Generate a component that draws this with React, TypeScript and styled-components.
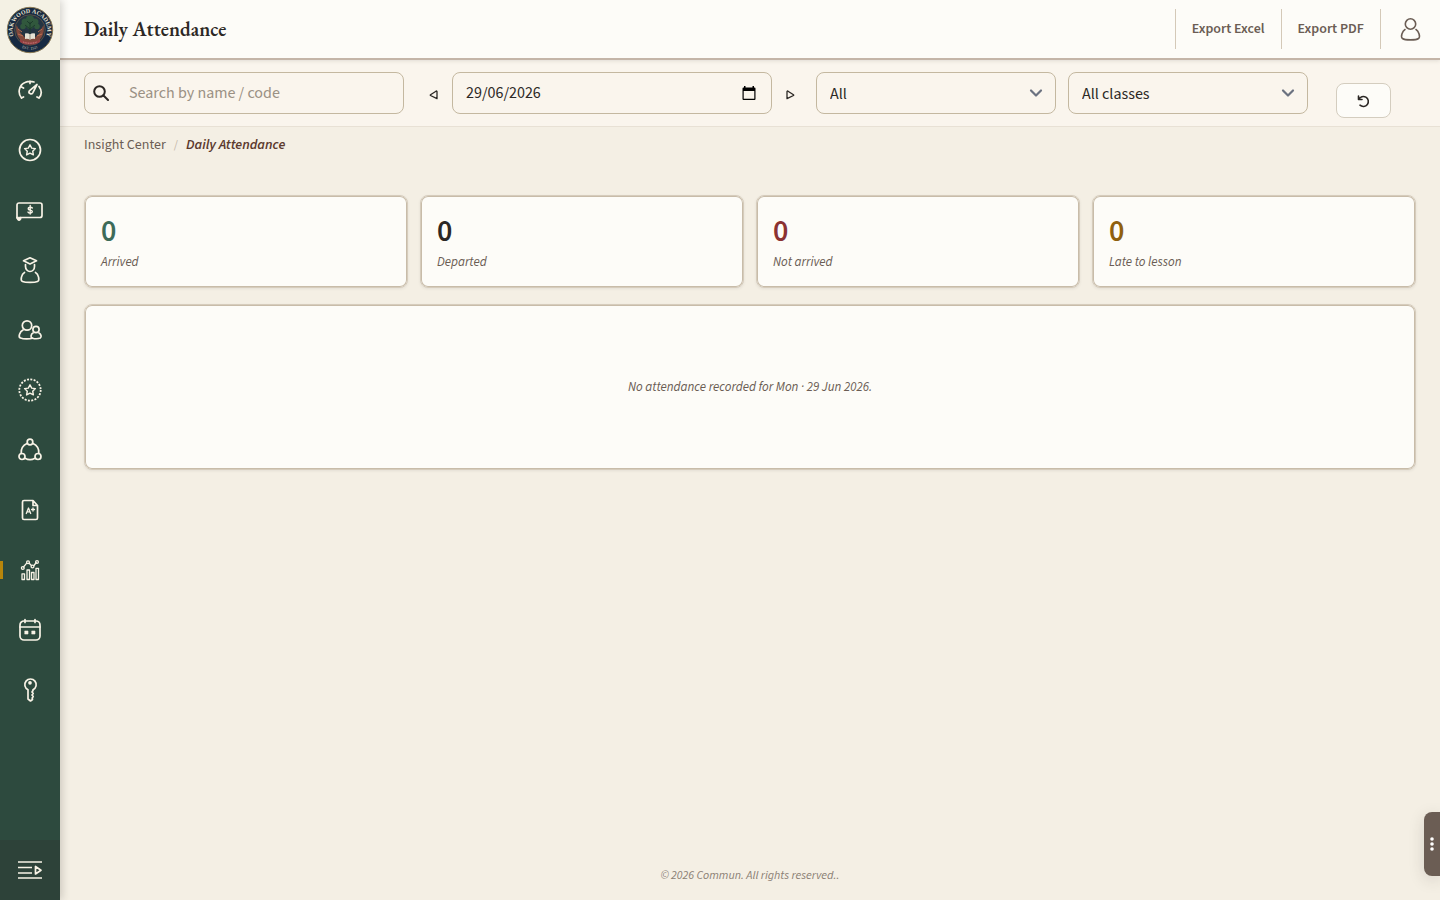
import React from 'react';
import styled, { createGlobalStyle } from 'styled-components';

const sans = '"Source Sans 3", "Source Sans Pro", "Noto Sans CJK SC", "Noto Sans", sans-serif';

const GlobalStyle = createGlobalStyle`
  *, *::before, *::after { box-sizing: border-box; }
  body { margin: 0; background: #f4efe4; color: #2c2825; font: 16px/20px ${sans}; }
  button, input, select { font: inherit; color: inherit; margin: 0; }
  button { border: 0; padding: 0; background: none; cursor: pointer; }
  svg { display: block; }
`;

const Page = styled.div`
  display: grid;
  grid-template-columns: 60px minmax(0, 1fr);
  min-height: 100vh;
`;

const Sidebar = styled.nav`
  position: sticky;
  top: 0;
  z-index: 2;
  height: 100vh;
  display: flex;
  flex-direction: column;
  background: #2d4a3e;
  box-shadow: 2px 0 8px rgba(44, 40, 37, 0.2);
`;

const LogoLink = styled.a`
  display: grid;
  place-items: center;
  height: 60px;
  background: #f4f1e4;
`;

const NavLink = styled.a<{ $active?: boolean }>`
  display: grid;
  place-items: center;
  height: 60px;
  color: #f8f3e6;
  background: ${p => (p.$active ? 'linear-gradient(#b8860b, #b8860b) left center / 3px 18px no-repeat' : 'none')};
`;

const SidebarToggle = styled.button`
  display: grid;
  place-items: center;
  height: 60px;
  margin-top: auto;
  color: #f8f3e6;
  background: #2d4239;
`;

const Column = styled.div`
  display: flex;
  flex-direction: column;
  min-width: 0;
`;

const Header = styled.header`
  display: flex;
  align-items: center;
  justify-content: space-between;
  height: 60px;
  padding-left: 24px;
  background: #fdfcf8;
  border-bottom: 2px solid #c4b5a8;
  box-shadow: 0 1px 4px rgba(44, 40, 37, 0.12);
  z-index: 1;
`;

const Title = styled.h1`
  margin: 0;
  font: 600 20px/28px "EB Garamond", "Liberation Serif", serif;
`;

const Actions = styled.div`
  display: flex;
  align-items: center;
`;

const ExportButton = styled.button`
  height: 40px;
  padding: 0 16px;
  border-left: 1px solid #d4c9b8;
  color: #6b5d54;
  font-size: 14px;
  font-weight: 600;
`;

const ProfileButton = styled.button`
  display: grid;
  place-items: center;
  width: 60px;
  height: 40px;
  border-left: 1px solid #d4c9b8;
  color: #6b5d54;
`;

const FilterBar = styled.form`
  display: flex;
  align-items: center;
  flex-wrap: wrap;
  gap: 12px;
  padding: 12px 24px;
  background: #faf5ed;
  border-bottom: 1px solid #e8e1d5;
`;

const Field = styled.label`
  display: flex;
  align-items: center;
  width: 320px;
  height: 42px;
  padding: 0 8px;
  border: 1px solid #c4b8a0;
  border-radius: 8px;
`;

const TextInput = styled.input`
  flex: 1;
  min-width: 0;
  padding: 0 5px;
  border: 0;
  outline: 0;
  background: none;
  font-variant-numeric: tabular-nums;
  &::placeholder { color: #9b9184; opacity: 1; }
`;

const SearchInput = styled(TextInput)`
  padding-left: 20px;
`;

const DateGroup = styled.div`
  display: flex;
  align-items: center;
  margin-right: -4px;
`;

const StepButton = styled.button`
  display: grid;
  place-items: center;
  width: 36px;
  height: 42px;
  padding-top: 4px;
`;

const CalendarButton = styled.button`
  padding: 4px 7px;
  color: #000;
`;

const SelectBox = styled.div`
  display: grid;
  align-items: center;
  width: 240px;
  & > * { grid-area: 1 / 1; }
  & > svg { justify-self: end; margin-right: 12px; pointer-events: none; }
`;

const Select = styled.select`
  appearance: none;
  width: 100%;
  height: 42px;
  padding: 2px 40px 0 13px;
  border: 1px solid #c4b8a0;
  border-radius: 8px;
  background: transparent;
`;

const ResetButton = styled.button`
  display: grid;
  place-items: center;
  align-self: flex-end;
  width: 55px;
  height: 35px;
  margin: 0 0 -4px 16px;
  border: 1px solid #d4cdbf;
  border-radius: 8px;
  background: #fdfcf8;
`;

const Breadcrumb = styled.nav`
  display: flex;
  gap: 8px;
  padding: 8px 24px;
  font-size: 14px;
  color: #c4b8a8;
`;

const Divider = styled.span`
  font-size: 12px;
`;

const CrumbLink = styled.a`
  color: #6b5d54;
  text-decoration: none;
`;

const CurrentCrumb = styled.span`
  color: #5c3a2e;
  font-weight: 600;
  font-style: italic;
`;

const Content = styled.main`
  display: flex;
  flex-direction: column;
  gap: 16px;
  padding: 32px 24px;
`;

const Stats = styled.section`
  display: grid;
  grid-template-columns: repeat(4, minmax(0, 1fr));
  gap: 12px;
`;

const Card = styled.div`
  border: 1px solid #d6ccbc;
  border-radius: 8px;
  background: #fdfcf8;
  box-shadow: inset 0 0 0 1px #c8bca9, 0 1px 3px rgba(44, 40, 37, 0.08);
`;

const StatCard = styled(Card)`
  height: 93px;
  padding: 16px;
`;

const StatValue = styled.div<{ $color: string }>`
  color: ${p => p.$color};
  font-size: 30px;
  line-height: 40px;
  font-weight: 600;
`;

const StatLabel = styled.div`
  color: #6b5d54;
  font-size: 13px;
  font-style: italic;
`;

const EmptyCard = styled(Card)`
  display: grid;
  place-items: center;
  height: 166px;
  color: #6b5d54;
  font-size: 13px;
  font-style: italic;
`;

const Footer = styled.footer`
  margin-top: auto;
  padding-bottom: 14px;
  text-align: center;
  color: #8b8074;
  font-size: 12px;
  font-style: italic;
`;

const SideTab = styled.button`
  position: fixed;
  right: 0;
  bottom: 24px;
  z-index: 3;
  display: grid;
  place-items: center;
  width: 16px;
  height: 64px;
  border-radius: 8px 0 0 8px;
  background: #6b5d54;
  color: #fff;
  box-shadow: 0 4px 16px rgba(44, 40, 37, 0.15);
`;

const Icon = ({ children, size = 28, width = 1.7 }: { children: React.ReactNode; size?: number; width?: number }) => (
  <svg width={size} height={size} viewBox={`0 0 ${size} ${size}`} fill="none" stroke="currentColor"
    strokeWidth={width} strokeLinecap="round" strokeLinejoin="round" aria-hidden="true">{children}</svg>
);

const star = 'M14 8.800l1.700 3.300 3.700.5-2.700 2.600.7 3.700-3.400-1.800-3.400 1.800.7-3.700-2.700-2.600 3.700-.5z';

const navItems = [
  { label: 'Dashboard', icon: <><path d="M5.500 22c-4.200-5-2.500-13 3.500-15.500A12 12 0 0 1 18 6M23 10.500c3 4 2.500 8.500 0 11.500M5.500 22l2-1M23 22l-2-1M14 5v2.500M5.500 11l2 1" /><path d="M21 8.500l-4.200 8.300a2 2 0 0 1-3.500-2z" /></> },
  { label: 'Achievements', icon: <><circle cx="14" cy="14" r="10.500" /><path d={star} strokeWidth="1.400" /></> },
  { label: 'Finance', icon: <><path d="M4.500 21.500H24a2 2 0 0 0 2-2V9a2 2 0 0 0-2-2H3a2 2 0 0 0-2 2v13" /><path d="M1 21.300h4v1.200a2 2 0 0 1-4 0z" fill="currentColor" strokeWidth="1" /><path d="M16.300 12c-1-1.300-4.300-1-4.100.8.200 1.800 4 .8 4.100 2.700.1 1.700-3.300 2-4.300.6M14.200 9.500V18" strokeWidth="1.400" /></> },
  { label: 'Students', icon: <><path d="M14 1.800l6.500 3L14 8 7.500 4.800zM9.500 8.500v2a4.500 5 0 0 0 9 0v-2M8.500 16.500C5.500 18 4 24.500 6.500 25.500c3 1.300 12 1.300 15 0 2.500-1 1-7.500-2-9" /></> },
  { label: 'Parents', icon: <><circle cx="11" cy="9.500" r="4.700" /><path d="M7 14c-3.200 1.500-5.200 7-2.500 8 3 1.200 9 1.200 12 .2" /><circle cx="20" cy="13.500" r="3.100" /><path d="M17 17c-2.200 1-2.700 4.700-.7 5.200 2.300.6 6 .6 8-.2 1.600-.8.700-4-1.300-5" /></> },
  { label: 'Badges', icon: <><circle cx="14" cy="14" r="10.700" strokeDasharray="2 1.362" strokeWidth="1.800" strokeLinecap="butt" /><path d={star} strokeWidth="1.400" /></> },
  { label: 'Community', icon: <><circle cx="14" cy="6" r="2.800" /><circle cx="6" cy="20.500" r="3" /><circle cx="22" cy="20.500" r="3" /><path d="M11 7.500A10 10 0 0 0 5.200 17.300M17 7.500a10 10 0 0 1 5.800 9.800M9 22.300c3 1.700 7 1.700 10 0" /></> },
  { label: 'Grades', icon: <><path d="M8 4.500H17l4.500 5V22a1.500 1.500 0 0 1-1.500 1.500H8A1.500 1.500 0 0 1 6.500 22V6A1.500 1.500 0 0 1 8 4.500zM17 5v4.500h4" /><path d="M10.300 17.500l2.200-5.500 2.200 5.500M11.200 15.800h2.800M17 12v3M15.500 13.500h3" strokeWidth="1.300" /></> },
  { label: 'Insight Center', active: true, icon: <g strokeWidth="1.300"><path d="M6 23.500v-5.700h2.500v5.700zM11 23.500V14h2.500v9.500zM15.500 23.500v-7H18v7zM20 23.500V12.300h2.500v11.200zM7.500 11l3-3.600M13.200 7.300l2.200 2.200M18 9.500l2.200-3" /><circle cx="6.800" cy="12" r="1.400" /><circle cx="12" cy="6.300" r="1.400" /><circle cx="16.500" cy="10.500" r="1.400" /><circle cx="21" cy="6" r="1.400" /></g> },
  { label: 'Calendar', icon: <><rect x="4" y="5" width="20" height="19" rx="4" /><path d="M4 11h20M9 3.500v3M19 3.500v3" /><path d="M9 15h3v3H9zM16 15h3v3h-3z" fill="currentColor" strokeWidth=".6" /></> },
  { label: 'Access', icon: <><path d="M12 13.800a5.700 5.700 0 1 1 5 0v.7l-1 1.500 1.200 1.500-1.200 1.500 1.200 1.500-1 1.500.3 1.500L14.500 25 12 23z" /><circle cx="14" cy="6.800" r="1" fill="currentColor" /></> },
];

const Crest = () => (
  <svg width="48" height="48" viewBox="0 0 48 48" role="img" aria-label="Oakwood Academy crest">
    <defs>
      <path id="crest-top" d="M10 34.500A17.300 17.300 0 1 1 38 34.500" />
      <path id="crest-foot" d="M14 41a20 20 0 0 0 20 0" />
    </defs>
    <circle cx="24" cy="24" r="22.700" fill="#172a42" stroke="#8a7a55" strokeWidth="1" />
    <circle cx="24" cy="24" r="15.300" fill="#243442" stroke="#6f5c47" strokeWidth=".7" />
    <path d="M10.500 19c-1.500 9 2 15 8.500 18h10c6.500-3 10-9 8.500-18l-4 8-5 5H19.500l-5-5z" fill="#81493c" />
    <path d="M12 23l4 3M12 28l5 2M36 23l-4 3M36 28l-5 2" stroke="#bb7052" strokeWidth="1" />
    <g fill="#31583d"><circle cx="24" cy="13.500" r="4" /><circle cx="19" cy="16" r="3.500" /><circle cx="29" cy="16" r="3.500" /><circle cx="17" cy="20.500" r="2.800" /><circle cx="31" cy="20.500" r="2.800" /><circle cx="24" cy="19" r="4" /></g>
    <path d="M24 27V16M24 23l-5-4M24 23l5-4M24 18l-3-3M24 18l3-3" stroke="#1d3b2c" strokeWidth="1" />
    <path d="M19 27.500q3-1 5 1 2-2 5-1V33q-3-.8-5 .8-2-1.600-5-.8z" fill="#e5e2d5" />
    <path d="M24 28.500v5" stroke="#766e60" strokeWidth=".7" />
    <path d="M14 33c5 4 15 4 20 0v3c-5 3.500-15 3.500-20 0z" fill="#963f43" />
    <path d="M17 36q7 2.500 14 0" stroke="#d09a8d" strokeWidth=".8" strokeDasharray="1 .7" fill="none" />
    <text fill="#e8e0cd" fontFamily="Liberation Serif" fontSize="6" fontWeight="700"><textPath href="#crest-top" startOffset="50%" textAnchor="middle">OAKWOOD ACADEMY</textPath></text>
    <text fill="#c9c4b4" fontFamily="Liberation Serif" fontSize="4"><textPath href="#crest-foot" startOffset="50%" textAnchor="middle">EST. 1921</textPath></text>
  </svg>
);

const Chevron = () => (
  <svg width="16" height="16" viewBox="0 0 16 16" fill="none" stroke="#6b7280" strokeWidth="2.200" strokeLinecap="round" strokeLinejoin="round" aria-hidden="true"><path d="M3 5.500l5 5 5-5" /></svg>
);

const stats = [
  { value: 0, label: 'Arrived', color: '#3d6b59' },
  { value: 0, label: 'Departed', color: '#2c2825' },
  { value: 0, label: 'Not arrived', color: '#8b3232' },
  { value: 0, label: 'Late to lesson', color: '#8f600e' },
];

export default function App() {
  return (
    <>
      <GlobalStyle />
      <Page>
        <Sidebar aria-label="Main">
          <LogoLink href="#"><Crest /></LogoLink>
          {navItems.map(item => (
            <NavLink key={item.label} href="#" aria-label={item.label} $active={item.active}>
              <Icon>{item.icon}</Icon>
            </NavLink>
          ))}
          <SidebarToggle type="button" aria-label="Expand menu">
            <Icon><path d="M2 6h24M2 11.500h14M2 17h14M2 22h24" strokeLinecap="butt" /><path d="M19.500 10.500v7.500l5.500-3.800z" /></Icon>
          </SidebarToggle>
        </Sidebar>
        <Column>
          <Header>
            <Title>Daily Attendance</Title>
            <Actions>
              <ExportButton type="button">Export Excel</ExportButton>
              <ExportButton type="button">Export PDF</ExportButton>
              <ProfileButton type="button" aria-label="Profile">
                <Icon width={1.6}><circle cx="13.500" cy="9" r="5.200" /><path d="M8 14.500C5.300 16 3.300 22 5.500 23.500c2.500 1.800 13.500 1.800 16 0 2.200-1.500.2-7.500-2.500-9" /></Icon>
              </ProfileButton>
            </Actions>
          </Header>
          <FilterBar>
            <Field>
              <Icon size={16} width={2}><circle cx="6.500" cy="6.500" r="5.300" /><path d="M10.500 10.500l4.500 4.500" /></Icon>
              <SearchInput type="search" placeholder="Search by name / code" aria-label="Search by name or code" />
            </Field>
            <DateGroup>
              <StepButton type="button" aria-label="Previous day"><Icon size={10} width={1.3}><path d="M8 1.500v7.200L1.500 5.500q-.6-.4 0-.8L7 1.200q1-.5 1 .3z" /></Icon></StepButton>
              <Field>
                <TextInput type="text" defaultValue="29/06/2026" aria-label="Date" />
                <CalendarButton type="button" aria-label="Open calendar">
                  <svg width="14" height="14" viewBox="0 0 14 14" fill="currentColor"><path d="M2 0h1.500v1.500h7V0H12v1.500h.5a1 1 0 0 1 1 1V13a1 1 0 0 1-1 1h-11a1 1 0 0 1-1-1V2.500a1 1 0 0 1 1-1H2zM1.700 5v7.800h10.600V5z" fillRule="evenodd" /></svg>
                </CalendarButton>
              </Field>
              <StepButton type="button" aria-label="Next day"><Icon size={10} width={1.3}><path d="M2 1.500v7.200l6.500-3.200q.6-.4 0-.8L3 1.200q-1-.5-1 .3z" /></Icon></StepButton>
            </DateGroup>
            <SelectBox>
              <Select aria-label="Status"><option>All</option></Select>
              <Chevron />
            </SelectBox>
            <SelectBox>
              <Select aria-label="Class"><option>All classes</option></Select>
              <Chevron />
            </SelectBox>
            <ResetButton type="reset" aria-label="Reset filters">
              <Icon size={14} width={1.6}><path d="M1.500 2v3.500H5M1.800 5.300a5 5 0 1 1 1.200 5.900" /></Icon>
            </ResetButton>
          </FilterBar>
          <Breadcrumb aria-label="Breadcrumb">
            <CrumbLink href="#">Insight Center</CrumbLink>
            <Divider>/</Divider>
            <CurrentCrumb aria-current="page">Daily Attendance</CurrentCrumb>
          </Breadcrumb>
          <Content>
            <Stats>
              {stats.map(stat => (
                <StatCard key={stat.label}>
                  <StatValue $color={stat.color}>{stat.value}</StatValue>
                  <StatLabel>{stat.label}</StatLabel>
                </StatCard>
              ))}
            </Stats>
            <EmptyCard>No attendance recorded for Mon · 29 Jun 2026.</EmptyCard>
          </Content>
          <Footer>© 2026 Commun. All rights reserved..</Footer>
        </Column>
      </Page>
      <SideTab type="button" aria-label="More options">
        <svg width="4" height="16" viewBox="0 0 4 16" fill="currentColor"><circle cx="2" cy="3" r="1.800" /><circle cx="2" cy="8" r="1.800" /><circle cx="2" cy="13" r="1.800" /></svg>
      </SideTab>
    </>
  );
}
